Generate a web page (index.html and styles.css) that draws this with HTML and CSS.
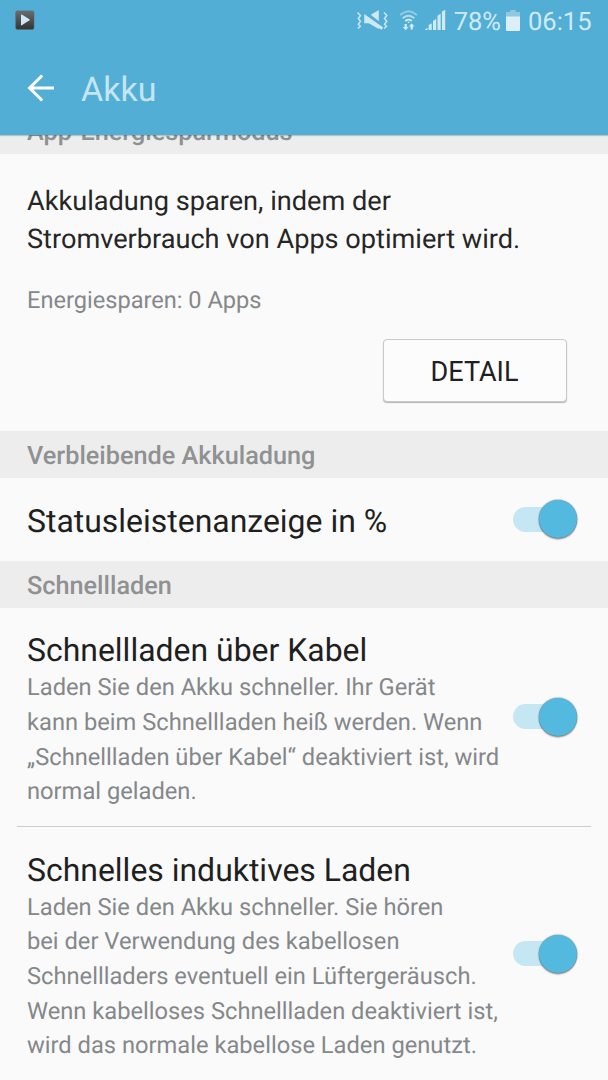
FILE: index.html
```html
<!DOCTYPE html>
<html lang="de">
<head>
<meta charset="utf-8">
<title>Akku</title>
<link rel="stylesheet" href="styles.css">
</head>
<body>
<div class="screen">
  <header class="top">
    <div class="status">
      <svg class="play" width="20" height="20" viewBox="0 0 20 20">
        <defs><linearGradient id="g" x1="0" y1="0" x2="0" y2="1"><stop offset="0" stop-color="#6c6c6c"/><stop offset="1" stop-color="#333"/></linearGradient></defs>
        <rect x=".7" y=".9" width="18.3" height="18.5" rx="1.6" fill="url(#g)" stroke="#4f6e7b" stroke-width=".6"/>
        <path d="M6 4.8Q6 4.2 6.8 4.6L14.4 9.2Q15 9.7 14.4 10.2L6.8 15.3Q6 15.6 6 15Z" fill="#cfeaf5"/>
      </svg>
      <svg class="signals" width="92" height="24" viewBox="0 0 92 24">
        <g fill="none" stroke="#c8e6f1" stroke-width="1.5">
          <path d="M1.500 3.500l3 3-2.200 3 2.200 2.700-2.200 3 2 2-2.500 2.300"/>
          <path d="M28 3.500l2.800 3-2.300 3 2.300 2.700-2.300 3 2 2-2.300 2.300"/>
        </g>
        <path d="M14.800 5.800L22.800 1v11.300zM8.200 5L27.200 18.500l-1.700 2.300-2.700-1.800v1L12.800 14.200H8.200z" fill="#cfe9f3"/>
        <g fill="none" stroke-linecap="round">
          <path d="M44.800 5.600Q52.500-.9 60.200 5.600" stroke="#94cde3" stroke-width="1.900"/>
          <path d="M47.300 8.800Q52.500 4.600 57.700 8.800" stroke="#b5dceb" stroke-width="1.900"/>
          <path d="M49.800 11.500Q52.500 9.700 55.200 11.500" stroke="#d6edf5" stroke-width="1.900"/>
        </g>
        <path d="M51 12.800h3l-1.500 1.500zM48.600 15h2.200v3h1.700l-2.800 3.200-2.800-3.200h1.700zM54.600 20.500v-3h-1.700l2.800-3.200 2.800 3.200h-1.700v3z" fill="#d6edf5"/>
        <path d="M69 20.500l2.500-1.800V21H69zM72.700 16l3-1.800V21h-3zM77 12l3.200-2.200V21H77zM81.500 6.800l3.200-2.200V21h-3.200zM86 2.500L89.200.8V21H86z" fill="#d0eaf4"/>
      </svg>
      <span class="pct">78%</span>
      <svg class="batt" width="14" height="22" viewBox="0 0 14 22">
        <path d="M4.300 0h5.400v2H14v5H0V2h4.300z" fill="#8fc9df"/>
        <path d="M0 6.500h14V20q0 1-1 1H1q-1 0-1-1z" fill="#dceff6"/>
      </svg>
      <span class="clock">06:15</span>
    </div>
    <div class="appbar">
      <svg class="back" width="28" height="28" viewBox="0 0 28 28" fill="none" stroke="#fff" stroke-width="3">
        <path d="M15.200 1.500L2.600 14l12.600 12.500M2.600 14H27"/>
      </svg>
      <h1 class="title">Akku</h1>
    </div>
  </header>
  <main class="content">
    <h2 class="section first">App-Energiesparmodus</h2>
    <div class="summary">
      <p class="lead">Akkuladung sparen, indem der<br>Stromverbrauch von Apps optimiert wird.</p>
      <p class="count">Energiesparen: 0 Apps</p>
      <button class="detail">DETAIL</button>
    </div>
    <h2 class="section">Verbleibende Akkuladung</h2>
    <div class="row single">
      <div class="label">Statusleistenanzeige in %</div>
      <div class="switch"><span class="thumb"></span></div>
    </div>
    <h2 class="section">Schnellladen</h2>
    <div class="row cable">
      <div>
        <div class="label">Schnellladen über Kabel</div>
        <p class="desc">Laden Sie den Akku schneller. Ihr Gerät<br>kann beim Schnellladen heiß werden. Wenn<br>„Schnellladen über Kabel“ deaktiviert ist, wird<br>normal geladen.</p>
      </div>
      <div class="switch"><span class="thumb"></span></div>
    </div>
    <div class="divider"></div>
    <div class="row wireless">
      <div>
        <div class="label">Schnelles induktives Laden</div>
        <p class="desc">Laden Sie den Akku schneller. Sie hören<br>bei der Verwendung des kabellosen<br>Schnellladers eventuell ein Lüftergeräusch.<br>Wenn kabelloses Schnellladen deaktiviert ist,<br>wird das normale kabellose Laden genutzt.</p>
      </div>
      <div class="switch"><span class="thumb"></span></div>
    </div>
  </main>
</div>
</body>
</html>
```
FILE: styles.css
```css
* { box-sizing: border-box; margin: 0; padding: 0; }
body { background: #fafafa; font-family: Roboto, sans-serif; color: #202020; text-rendering: geometricPrecision; }
.screen { width: 608px; height: 1080px; overflow: hidden; background: #fafafa; }
.top { position: relative; z-index: 1; height: 135px; background: #52aed5; box-shadow: 0 1px 1px rgba(0,0,0,.18); }
.status { display: flex; align-items: center; height: 42px; padding: 0 16.5px 0 15px; color: #d0eaf4; font-size: 25.5px; white-space: nowrap; }
.play { margin-top: -2px; }
.signals { margin-left: auto; }
.pct, .clock { padding-top: 1px; }
.pct { margin-left: 5.5px; }
.batt { margin: 0 8px 0 5px; }
.appbar { display: flex; align-items: center; height: 93px; padding-left: 27px; }
.back { margin-top: -2px; }
.title { margin: 2px 0 0 26px; font-size: 34px; font-weight: 400; line-height: 42px; color: #c5e5f1; }
.content { margin-top: -28px; }
.section { height: 47px; padding: 2px 27px 0; background: #ededed; color: #8f9192; font-size: 25.25px; font-weight: 500; line-height: 47px; white-space: nowrap; }
.summary { display: flex; flex-direction: column; height: 277px; padding: 27.5px 41.5px 0 27px; }
.lead { font-size: 27.15px; line-height: 38.5px; white-space: nowrap; color: #262626; }
.count { margin-top: 24px; font-size: 23.6px; line-height: 34px; color: #85888a; }
.detail { align-self: flex-end; width: 184px; height: 63px; margin-top: 22px; padding-top: 3px; border: 1px solid #c9c9c9; border-radius: 4px; background: #fcfcfc; box-shadow: 0 1px 1px rgba(0,0,0,.28); color: #202020; font: 27px/58px Roboto, sans-serif; }
.row { display: flex; align-items: center; justify-content: space-between; padding: 0 31px 0 27px; }
.single { height: 82.5px; }
.cable { height: 218.5px; }
.wireless { height: 253px; }
.label { padding-top: 3px; font-size: 31.95px; line-height: 40px; white-space: nowrap; color: #1f1f1f; }
.cable .label, .wireless .label { padding-top: 5.5px; }
.desc { font-size: 23.7px; line-height: 34.6px; white-space: nowrap; color: #85888a; }
.switch { display: flex; align-items: center; justify-content: flex-end; flex: none; width: 64px; height: 25px; border-radius: 13px; background: #c5e7f3; }
.thumb { width: 38px; height: 38px; border-radius: 50%; background: #54b9df; box-shadow: 0 0 1px .5px rgba(50,80,95,.5), 0 1.5px 1.5px rgba(0,0,0,.35); }
.divider { height: 1px; margin: 0 17px; background: #cdcdcd; }
```
